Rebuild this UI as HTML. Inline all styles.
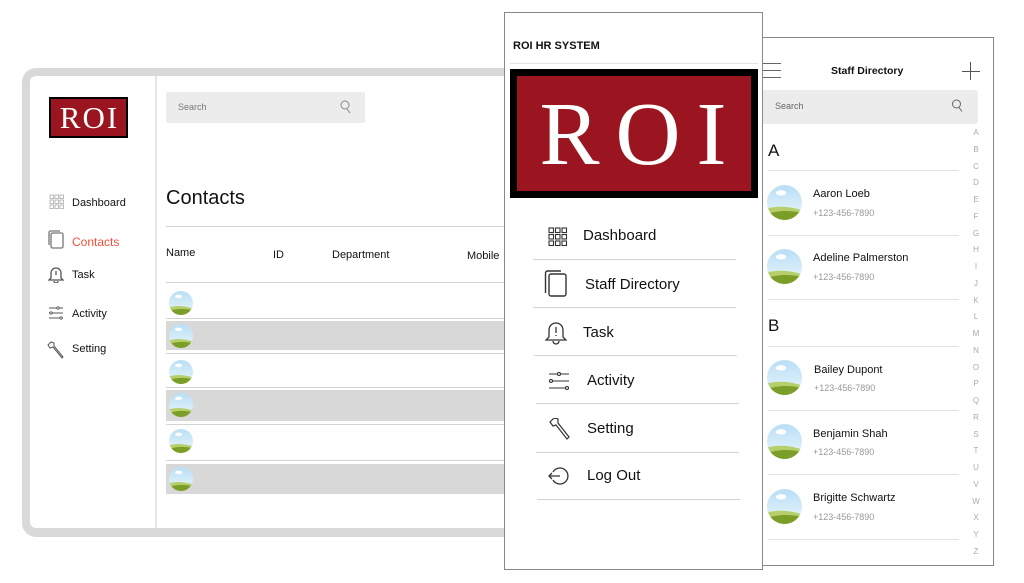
<!DOCTYPE html>
<html><head><meta charset="utf-8"><style>
*{margin:0;padding:0;box-sizing:border-box}
body{width:1024px;height:583px;background:#fff;position:relative;overflow:hidden;font-family:"Liberation Sans",sans-serif;color:#111}
.a{position:absolute}
.t{position:absolute;white-space:nowrap}
.hl{position:absolute;height:1px;background:#d4d4d4}
svg.ic{position:absolute;fill:none;stroke:#333;stroke-width:1.3}
</style></head><body>
<svg width="0" height="0" style="position:absolute"><defs>
<linearGradient id="sky" x1="0" y1="0" x2="0" y2="1"><stop offset="0" stop-color="#b9def5"/><stop offset="1" stop-color="#eaf6fc"/></linearGradient>
<symbol id="av" viewBox="0 0 40 40"><clipPath id="cc"><circle cx="20" cy="20" r="20"/></clipPath><g clip-path="url(#cc)"><rect width="40" height="40" fill="url(#sky)"/><ellipse cx="16" cy="9" rx="6" ry="3" fill="#fff"/><path d="M0 27 Q18 22 40 29 L40 40 L0 40Z" fill="#b7cf6a"/><path d="M0 33 Q20 27 40 32 L40 40 L0 40Z" fill="#7a9e28"/></g></symbol>
</defs></svg>

<!-- left tablet -->
<div class="a" style="left:22px;top:68px;width:520px;height:469px;background:#d9d9d9;border-radius:14px"></div>
<div class="a" style="left:30px;top:76px;width:500px;height:452px;background:#fff;border-radius:6px"></div>
<div class="a" style="left:155px;top:76px;width:2px;height:452px;background:#e6e6e6"></div>
<div class="a" style="left:49px;top:97px;width:79px;height:41px;background:#000;padding:2px"><div style="width:100%;height:100%;background:#9b1520;color:#fff;font:31px 'Liberation Serif',serif;text-align:center;line-height:38px;letter-spacing:2px;padding-left:2px">ROI</div></div>
<svg class="ic" style="left:49px;top:194px;stroke:#aaa" width="16" height="16" viewBox="0 0 16 16"><g stroke-width="0.8"><rect x="1" y="1" width="3.5" height="3.5"/><rect x="6" y="1" width="3.5" height="3.5"/><rect x="11" y="1" width="3.5" height="3.5"/><rect x="1" y="6" width="3.5" height="3.5"/><rect x="6" y="6" width="3.5" height="3.5"/><rect x="11" y="6" width="3.5" height="3.5"/><rect x="1" y="11" width="3.5" height="3.5"/><rect x="6" y="11" width="3.5" height="3.5"/><rect x="11" y="11" width="3.5" height="3.5"/></g></svg>
<div class="t" style="left:72px;top:197px;font-size:11px">Dashboard</div>
<svg class="ic" style="left:48px;top:230px;stroke:#777" width="16" height="19" viewBox="0 0 16 19"><rect x="3" y="3" width="12" height="15" rx="1.5"/><path d="M1 15V2.5A1.5 1.5 0 0 1 2.5 1H12"/></svg>
<div class="t" style="left:72px;top:235px;font-size:12px;color:#f2503c">Contacts</div>
<svg class="ic" style="left:48px;top:265px;stroke:#555" width="16" height="18" viewBox="0 0 16 18"><path d="M3 13V8a5 5 0 0 1 10 0v5l2 2H1z M6 16a2 2 0 0 0 4 0 M8 6v4"/></svg>
<div class="t" style="left:72px;top:269px;font-size:11px">Task</div>
<svg class="ic" style="left:48px;top:306px;stroke:#555;stroke-width:0.9" width="16" height="14" viewBox="0 0 16 14"><path d="M1 2h14M1 7h14M1 12h14"/><circle cx="10" cy="2" r="1.2" fill="#fff"/><circle cx="3" cy="7" r="1.2" fill="#fff"/><circle cx="13" cy="12" r="1.2" fill="#fff"/></svg>
<div class="t" style="left:72px;top:308px;font-size:11px">Activity</div>
<svg class="ic" style="left:47px;top:341px;stroke:#555;stroke-width:1" width="18" height="20" viewBox="0 0 18 20"><path d="M3 2 L1 4 L3 7 L6 6 L15 17 L16 16 L7 5 L7 2 L4 1Z"/></svg>
<div class="t" style="left:72px;top:343px;font-size:11px">Setting</div>

<div class="a" style="left:166px;top:92px;width:199px;height:31px;background:#ececec;border-radius:2px"></div>
<div class="t" style="left:178px;top:102px;font-size:9px;color:#777">Search</div>
<svg class="ic" style="left:339px;top:100px;stroke:#888;stroke-width:1" width="12" height="14" viewBox="0 0 12 14"><circle cx="6" cy="5" r="4"/><path d="M8 9l3 4"/></svg>
<div class="t" style="left:166px;top:187px;font-size:20px">Contacts</div>
<div class="hl" style="left:166px;top:226px;width:340px"></div>
<div class="t" style="left:166px;top:247px;font-size:11px">Name</div>
<div class="t" style="left:273px;top:249px;font-size:11px">ID</div>
<div class="t" style="left:332px;top:249px;font-size:11px">Department</div>
<div class="t" style="left:467px;top:250px;font-size:11px">Mobile</div>
<div class="hl" style="left:166px;top:282px;width:340px"></div>
<div class="hl" style="left:166px;top:318px;width:340px"></div>
<div class="a" style="left:166px;top:321px;width:340px;height:29px;background:#d8d8d8"></div>
<div class="hl" style="left:166px;top:353px;width:340px"></div>
<div class="hl" style="left:166px;top:387px;width:340px"></div>
<div class="a" style="left:166px;top:390px;width:340px;height:31px;background:#d8d8d8"></div>
<div class="hl" style="left:166px;top:424px;width:340px"></div>
<div class="hl" style="left:166px;top:460px;width:340px"></div>
<div class="a" style="left:166px;top:464px;width:340px;height:30px;background:#d8d8d8"></div>
<svg class="a" style="left:169px;top:291px" width="24" height="24"><use href="#av"/></svg>
<svg class="a" style="left:169px;top:324px" width="24" height="24"><use href="#av"/></svg>
<svg class="a" style="left:169px;top:360px" width="24" height="24"><use href="#av"/></svg>
<svg class="a" style="left:169px;top:393px" width="24" height="24"><use href="#av"/></svg>
<svg class="a" style="left:169px;top:429px" width="24" height="24"><use href="#av"/></svg>
<svg class="a" style="left:169px;top:467px" width="24" height="24"><use href="#av"/></svg>

<!-- middle panel -->
<div class="a" style="left:504px;top:12px;width:259px;height:558px;background:#fff;border:1px solid #888"></div>
<div class="t" style="left:513px;top:40px;font-size:11px;font-weight:bold">ROI HR SYSTEM</div>
<div class="hl" style="left:510px;top:63px;width:248px;background:#e4e4e4"></div>
<div class="a" style="left:510px;top:69px;width:248px;height:129px;background:#000;padding:7px"><div style="width:100%;height:100%;background:#9b1520;color:#fff;font:90px 'Liberation Serif',serif;text-align:center;line-height:118px;letter-spacing:16px;padding-left:14px">ROI</div></div>
<svg class="ic" style="left:548px;top:227px;stroke-width:1.1" width="20" height="20" viewBox="0 0 20 20"><rect x="1" y="1" width="4.5" height="4.5"/><rect x="7.5" y="1" width="4.5" height="4.5"/><rect x="14" y="1" width="4.5" height="4.5"/><rect x="1" y="7.5" width="4.5" height="4.5"/><rect x="7.5" y="7.5" width="4.5" height="4.5"/><rect x="14" y="7.5" width="4.5" height="4.5"/><rect x="1" y="14" width="4.5" height="4.5"/><rect x="7.5" y="14" width="4.5" height="4.5"/><rect x="14" y="14" width="4.5" height="4.5"/></svg>
<div class="t" style="left:583px;top:227px;font-size:15px">Dashboard</div>
<div class="hl" style="left:533px;top:259px;width:203px"></div>
<svg class="ic" style="left:544px;top:270px;stroke-width:1.4" width="23" height="27" viewBox="0 0 23 27"><rect x="5" y="4" width="17" height="22" rx="2"/><path d="M1.5 23V3A2 2 0 0 1 3.5 1H17"/></svg>
<div class="t" style="left:585px;top:276px;font-size:15px">Staff Directory</div>
<div class="hl" style="left:533px;top:307px;width:203px"></div>
<svg class="ic" style="left:545px;top:320px;stroke-width:1.3" width="22" height="25" viewBox="0 0 22 25"><path d="M4 17V10a7 7 0 0 1 14 0v7l3 3H1z M8 21a3 3 0 0 0 6 0 M11 7v6 M11 15v1"/></svg>
<div class="t" style="left:583px;top:324px;font-size:15px">Task</div>
<div class="hl" style="left:534px;top:355px;width:203px"></div>
<svg class="ic" style="left:548px;top:372px;stroke-width:1.1" width="22" height="18" viewBox="0 0 22 18"><path d="M1 2h20M1 9h20M1 16h20"/><circle cx="11" cy="2" r="1.5" fill="#fff"/><circle cx="3" cy="9" r="1.5" fill="#fff"/><circle cx="19" cy="16" r="1.5" fill="#fff"/></svg>
<div class="t" style="left:587px;top:372px;font-size:15px">Activity</div>
<div class="hl" style="left:536px;top:403px;width:203px"></div>
<svg class="ic" style="left:549px;top:418px;stroke-width:1.2" width="22" height="23" viewBox="0 0 22 23"><path d="M4 1 L1 4 L4 8 L7 7 L18 21 L20 19 L9 5 L9 1 L6 0Z"/></svg>
<div class="t" style="left:587px;top:420px;font-size:15px">Setting</div>
<div class="hl" style="left:536px;top:452px;width:203px"></div>
<svg class="ic" style="left:548px;top:467px;stroke-width:1.3" width="22" height="18" viewBox="0 0 22 18"><path d="M5 5A8 8 0 1 1 5 13 M1 9h11 M4 6l-3 3 3 3"/></svg>
<div class="t" style="left:587px;top:467px;font-size:15px">Log Out</div>
<div class="hl" style="left:537px;top:499px;width:203px"></div>

<!-- right panel -->
<div class="a" style="left:763px;top:37px;width:231px;height:529px;background:#fff;border:1px solid #888;border-left:none"></div>
<div class="a" style="left:763px;top:63px;width:18px;height:1px;background:#666"></div>
<div class="a" style="left:763px;top:70px;width:18px;height:1px;background:#666"></div>
<div class="a" style="left:763px;top:77px;width:18px;height:1px;background:#666"></div>
<div class="t" style="left:831px;top:65px;font-size:10.5px;font-weight:bold">Staff Directory</div>
<div class="a" style="left:962px;top:71px;width:18px;height:1.3px;background:#555"></div>
<div class="a" style="left:970px;top:62px;width:1.3px;height:18px;background:#555"></div>
<div class="a" style="left:763px;top:90px;width:215px;height:34px;background:#ececec;border-radius:0 3px 3px 0"></div>
<div class="t" style="left:775px;top:101px;font-size:9px;color:#666">Search</div>
<svg class="ic" style="left:951px;top:99px;stroke:#666;stroke-width:1" width="12" height="14" viewBox="0 0 12 14"><circle cx="5.5" cy="5" r="4"/><path d="M8 8.5l3 4"/></svg>
<div class="t" style="left:768px;top:141px;font-size:17px">A</div>
<div class="hl" style="left:768px;top:170px;width:191px;background:#e2e2e2"></div>
<svg class="a" style="left:767px;top:185px" width="35" height="35"><use href="#av"/></svg>
<div class="t" style="left:813px;top:188px;font-size:11px">Aaron Loeb</div>
<div class="t" style="left:813px;top:208px;font-size:9px;color:#999">+123-456-7890</div>
<div class="hl" style="left:768px;top:235px;width:191px;background:#e2e2e2"></div>
<svg class="a" style="left:767px;top:249px" width="35" height="35"><use href="#av"/></svg>
<div class="t" style="left:813px;top:252px;font-size:11px">Adeline Palmerston</div>
<div class="t" style="left:813px;top:272px;font-size:9px;color:#999">+123-456-7890</div>
<div class="hl" style="left:768px;top:299px;width:191px;background:#e2e2e2"></div>
<div class="t" style="left:768px;top:316px;font-size:17px">B</div>
<div class="hl" style="left:768px;top:346px;width:191px;background:#e2e2e2"></div>
<svg class="a" style="left:767px;top:360px" width="35" height="35"><use href="#av"/></svg>
<div class="t" style="left:814px;top:364px;font-size:11px">Bailey Dupont</div>
<div class="t" style="left:814px;top:383px;font-size:9px;color:#999">+123-456-7890</div>
<div class="hl" style="left:768px;top:410px;width:191px;background:#e2e2e2"></div>
<svg class="a" style="left:767px;top:424px" width="35" height="35"><use href="#av"/></svg>
<div class="t" style="left:813px;top:428px;font-size:11px">Benjamin Shah</div>
<div class="t" style="left:813px;top:447px;font-size:9px;color:#999">+123-456-7890</div>
<div class="hl" style="left:768px;top:474px;width:191px;background:#e2e2e2"></div>
<svg class="a" style="left:767px;top:489px" width="35" height="35"><use href="#av"/></svg>
<div class="t" style="left:813px;top:492px;font-size:11px">Brigitte Schwartz</div>
<div class="t" style="left:813px;top:512px;font-size:9px;color:#999">+123-456-7890</div>
<div class="hl" style="left:768px;top:539px;width:191px;background:#e2e2e2"></div>
<div class="a" style="left:970px;top:125px;width:12px;font-size:8px;color:#aaa;text-align:center;line-height:16.75px">A<br>B<br>C<br>D<br>E<br>F<br>G<br>H<br>I<br>J<br>K<br>L<br>M<br>N<br>O<br>P<br>Q<br>R<br>S<br>T<br>U<br>V<br>W<br>X<br>Y<br>Z</div>
</body></html>
